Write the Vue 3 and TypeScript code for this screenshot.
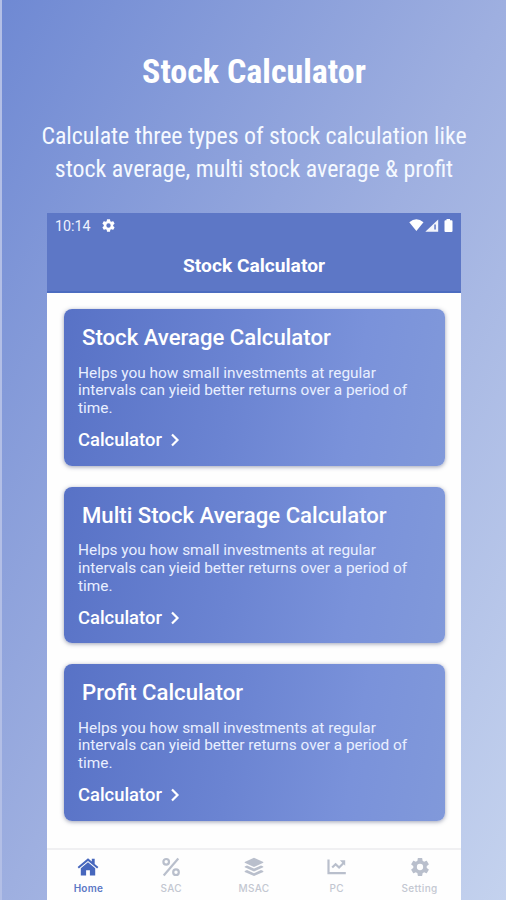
<script setup lang="ts">
interface CalculatorCard {
  title: string
  text: string[]
}

interface Tab {
  label: string
  icon: string
  active?: boolean
}

const text = [
  'Helps you how small investments at regular',
  'intervals can yieid better returns over a period of',
  'time.',
]

const cards: CalculatorCard[] = [
  { title: 'Stock Average Calculator', text },
  { title: 'Multi Stock Average Calculator', text },
  { title: 'Profit Calculator', text },
]

const tabs: Tab[] = [
  { label: 'Home', icon: 'home', active: true },
  { label: 'SAC', icon: 'percent' },
  { label: 'MSAC', icon: 'layers' },
  { label: 'PC', icon: 'chart' },
  { label: 'Setting', icon: 'gear' },
]

const gearPath =
  'M19.43 12.98c.04-.32.07-.64.07-.98s-.03-.66-.07-.98l2.11-1.65c.19-.15.24-.42.12-.64l-2-3.46c-.12-.22-.39-.3-.61-.22l-2.49 1c-.52-.4-1.08-.73-1.69-.98l-.38-2.65C14.46 2.18 14.25 2 14 2h-4c-.25 0-.46.18-.49.42l-.38 2.65c-.61.25-1.17.59-1.69.98l-2.49-1c-.23-.09-.49 0-.61.22l-2 3.46c-.13.22-.07.49.12.64l2.11 1.65c-.04.32-.07.65-.07.98s.03.66.07.98l-2.11 1.65c-.19.15-.24.42-.12.64l2 3.46c.12.22.39.3.61.22l2.49-1c.52.4 1.08.73 1.69.98l.38 2.65c.03.24.24.42.49.42h4c.25 0 .46-.18.49-.42l.38-2.65c.61-.25 1.17-.59 1.69-.98l2.49 1c.23.09.49 0 .61-.22l2-3.46c.12-.22.07-.49-.12-.64l-2.11-1.65zM12 15.5a3.5 3.5 0 1 1 0-7 3.5 3.5 0 0 1 0 7z'
</script>

<template>
  <main class="promo">
    <header class="intro">
      <h1 class="intro-title">Stock Calculator</h1>
      <p class="intro-line first">Calculate three types of stock calculation like</p>
      <p class="intro-line">stock average, multi stock average &amp; profit</p>
    </header>

    <section class="phone">
      <div class="appbar">
        <div class="status">
          <span class="time">10:14</span>
          <svg class="status-gear" viewBox="0 0 24 24"><path :d="gearPath" fill-rule="evenodd" /></svg>
          <svg class="status-icons" viewBox="0 0 46 16">
            <path d="M0.300 4.200Q7.300 -1.800 14.500 4.200L7.400 13z" />
            <path d="M16.300 13.800L29.200 1.500v12.300z" opacity=".92" />
            <path class="signal-gap" d="M25.300 6.500h1.500v5h-1.500z" />
            <path d="M37.500 1h3.500v1.300h1.500q1 0 1 1v9.700q0 1-1 1h-6q-1 0-1-1v-9.700q0-1 1-1h1z" />
          </svg>
        </div>
        <h2 class="app-title">Stock Calculator</h2>
      </div>

      <div class="cards">
        <article v-for="card in cards" :key="card.title" class="card">
          <h3 class="card-title">{{ card.title }}</h3>
          <p class="card-text">
            <span v-for="line in card.text" :key="line" class="card-line">{{ line }}</span>
          </p>
          <div class="card-link">
            <span>Calculator</span>
            <svg class="chevron" viewBox="0 0 10 14"><path d="M2 1.500L7.500 7L2 12.500" /></svg>
          </div>
        </article>
      </div>

      <nav class="tabs">
        <div v-for="tab in tabs" :key="tab.label" class="tab" :class="{ active: tab.active }">
          <svg v-if="tab.icon === 'home'" class="icon" viewBox="0 0 22 20">
            <path d="M11 1.200L.6 10l1.300 1.500L11 3.900l9.100 7.600L21.400 10 17.700 6.900V1.800h-2.900v2.700z" />
            <path d="M11 5.300L3.800 11.300V18.500h5.300v-5.200h3.800v5.200h5.300v-7.200z" />
          </svg>
          <svg v-else-if="tab.icon === 'percent'" class="icon line" viewBox="0 0 22 20">
            <path d="M18.300 1.500L3.700 18.500" /><circle cx="6.200" cy="4.800" r="2.800" /><circle cx="16" cy="15.200" r="2.800" />
          </svg>
          <svg v-else-if="tab.icon === 'layers'" class="icon" viewBox="0 0 22 20">
            <path d="M11 .8l9.300 4.100v.8L11 9.900 1.700 5.700v-.8z" />
            <path d="M1.700 9.500l2.300-1 7 3.100 7-3.100 2.300 1v.8L11 14.500 1.700 10.300z" />
            <path d="M1.700 14.100l2.300-1 7 3.100 7-3.100 2.300 1v.8L11 19.100 1.700 14.900z" />
          </svg>
          <svg v-else-if="tab.icon === 'chart'" class="icon line" viewBox="0 0 22 20">
            <path d="M2.500 2.500v13.700h17.300" /><path d="M6.200 10.500l3.400-3.300 3.500 3.300 5-5" /><path class="solid" d="M13.800 3.300h5.400v5.400z" />
          </svg>
          <svg v-else class="icon gear" viewBox="1 2 22 20"><path :d="gearPath" fill-rule="evenodd" /></svg>
          <span class="tab-label">{{ tab.label }}</span>
        </div>
      </nav>
    </section>
  </main>
</template>

<style>
body {
  margin: 0;
}
</style>

<style scoped>
.promo {
  box-sizing: border-box;
  width: 506px;
  height: 900px;
  overflow: hidden;
  border-left: 2px solid #b3bfe6;
  background: linear-gradient(to bottom right, #6f89d3, #9eafe0 50%, #c4d2ee);
  font-family: Roboto, "Liberation Sans", sans-serif;
  color: #fff;
}

.intro {
  box-sizing: border-box;
  display: flex;
  flex-direction: column;
  align-items: center;
  height: 213px;
  padding-top: 51px;
  white-space: nowrap;
  font-stretch: 75%;
}

.intro-title {
  margin: 0 0 29px;
  font-size: 34px;
  line-height: 40px;
  font-weight: 700;
}

.intro-line {
  margin: 0;
  font-size: 23.900px;
  line-height: 32.500px;
  color: #f5f9ff;
}

.intro-line.first {
  letter-spacing: -0.050px;
}

.phone {
  display: flex;
  flex-direction: column;
  width: 414px;
  height: 687px;
  margin-left: 45px;
  background: #fefefe;
}

.appbar {
  box-sizing: border-box;
  height: 79.500px;
  background: #5d77c6;
  border-bottom: 2px solid #4c6cc0;
}

.status {
  display: flex;
  align-items: center;
  height: 25px;
  padding: 0 6px 0 8px;
}

.time {
  width: 37px;
  font-size: 14.300px;
  color: #edf2ff;
}

.status-gear {
  width: 15px;
  height: 15px;
  margin-left: 9px;
  fill: #fff;
}

.status-icons {
  width: 46px;
  height: 16px;
  margin-left: auto;
  fill: #fff;
}

.status-icons .signal-gap {
  fill: #5d77c6;
}

.app-title {
  margin: 16px 0 0;
  font-size: 19.200px;
  line-height: 24px;
  font-weight: 700;
  text-align: center;
}

.cards {
  display: flex;
  flex: 1;
  flex-direction: column;
  gap: 21px;
  padding: 16.500px 16px 0 16.500px;
}

.card {
  box-sizing: border-box;
  height: 156.500px;
  padding: 13px 14px 0 14.500px;
  border-radius: 8px;
  background: linear-gradient(100deg, #5872c6, #6b84d2 45%, #7a92da 75%, #8199da);
  box-shadow: 0 1px 4px rgba(60, 70, 110, 0.5);
}

.card-title {
  margin: 0 0 0 4px;
  font-size: 22.150px;
  line-height: 30px;
  font-weight: 500;
  white-space: nowrap;
}

.card-text {
  margin: 12.500px 0 0;
  font-size: 15.400px;
  line-height: 17.900px;
  color: #e9efff;
}

.card-line {
  display: block;
  white-space: nowrap;
}

.card-link {
  display: flex;
  align-items: center;
  margin-top: 11px;
  font-size: 18.400px;
  line-height: 22px;
  font-weight: 500;
}

.chevron {
  width: 10px;
  height: 14px;
  margin-left: 8px;
  fill: none;
  stroke: #fff;
  stroke-width: 2.200;
}

.tabs {
  box-sizing: border-box;
  display: flex;
  height: 52px;
  border-top: 2px solid #f0f0f2;
}

.tab {
  display: flex;
  flex: 1;
  flex-direction: column;
  align-items: center;
  padding-top: 7px;
  color: #b9bfcc;
}

.tab.active {
  color: #4767bd;
}

.icon {
  width: 22px;
  height: 20px;
  fill: currentColor;
}

.icon.line {
  fill: none;
  stroke: currentColor;
  stroke-width: 2.200;
}

.icon.gear {
  width: 20px;
  height: 18px;
  padding: 1px;
}

.icon .solid {
  fill: currentColor;
  stroke: none;
}

.tab-label {
  margin-top: 4px;
  font-family: Inter, Roboto, sans-serif;
  font-size: 10px;
  line-height: 14px;
  font-weight: 500;
  letter-spacing: 0.350px;
  color: #c3c7d1;
}

.active .tab-label {
  font-weight: 600;
  letter-spacing: 0.250px;
  color: #5b78c5;
}
</style>
